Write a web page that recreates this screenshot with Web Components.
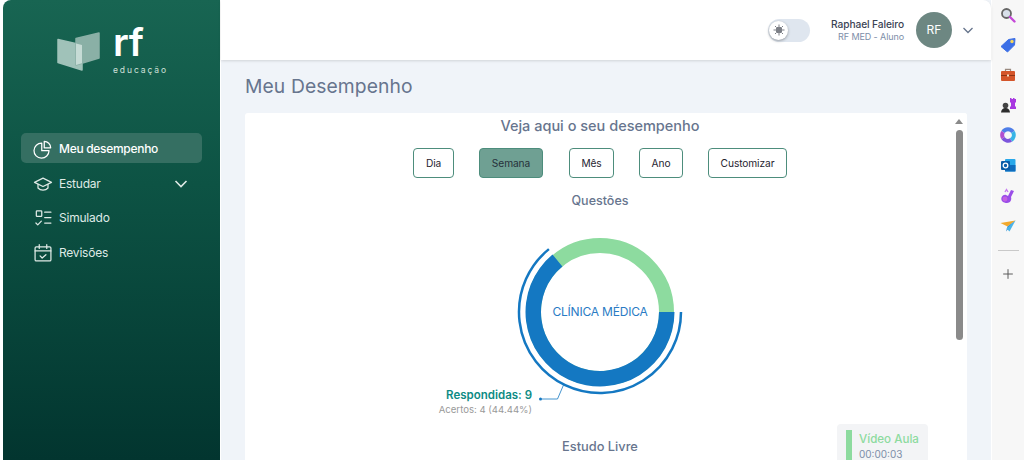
<!DOCTYPE html>
<html lang="pt"><head><meta charset="utf-8">
<style>
html,body{margin:0;padding:0;height:460px;overflow:hidden;background:#fff;font-family:"Inter","Noto Sans",sans-serif}
</style></head><body>
<rf-app></rf-app>
<script>
const FONT='"Inter","Noto Sans",sans-serif';
function def(name,html,setup){
  customElements.define(name,class extends HTMLElement{
    constructor(){super();this.attachShadow({mode:'open'}).innerHTML=html;}
    connectedCallback(){if(setup)setup(this)}
  });
}
const ICONS={
 pie:'<path d="M13.500 2.800v7.700h7.700A7.800 7.800 0 0 0 13.500 2.800Z"/><path d="M10.500 5a9 9 0 1 0 8.700 9h-8.700Z"/>',
 cap:'<path d="M12 5 1.800 10 12 15l10.200-5Z"/><path d="M6 12.500v4.300c1.500 1.600 3.700 2.500 6 2.500s4.500-.9 6-2.500v-4.300"/>',
 list:'<rect x="4" y="3.500" width="6.500" height="6.500" rx=".8"/><path d="M14 5h7.500M14 11.500h7.500M14 18h7.500M3.500 18l2.200 2.200 4.300-4.500"/>',
 cal:'<rect x="2.500" y="4.500" width="19" height="17" rx="1.500"/><path d="M2.500 9.500h19M7.500 2v4.500M16.500 2v4.500M8.500 15.500l2.500 2.500 4.500-4"/>'
};
def('rf-logo',`<style>:host{display:flex;align-items:flex-start;height:52px;gap:13px;width:109px}
.t{display:flex;flex-direction:column;color:#fff;margin-top:-3px}
.rf{font:600 39px/31px ${FONT};height:31px;letter-spacing:-.5px}
.e{font:400 8.500px/10px ${FONT};letter-spacing:1.900px;color:#cfe0da;margin-top:8px;white-space:nowrap}
svg{margin-top:3px;flex:none}
</style>
<svg width="43" height="39" viewBox="0 0 43 39" stroke-linejoin="round">
<path d="M1 7.500 25 13V38L1 30.500Z" fill="#a0c2b9" stroke="#a0c2b9" stroke-width="1.500"/>
<path d="M42 1 19 6.500V33L42 26Z" fill="#8ab0a6" stroke="#8ab0a6" stroke-width="1.500"/>
<path d="M19 11.500 25 13V31.200L19 33Z" fill="#c6dbd5"/>
</svg>
<div class="t"><span class="rf">rf</span><span class="e">educação</span></div>`);
def('nav-item',`<style>:host{display:flex;align-items:center;height:30px;box-sizing:border-box;padding:2px 14px 0 12px;gap:6px;border-radius:5px;color:#dfeae6;font:400 12px/1 ${FONT};letter-spacing:-.22px}
:host([active]){background:#356f62;color:#fff;font-weight:500;letter-spacing:-.3px}
svg.i{width:20px;height:20px;fill:none;stroke:currentColor;stroke-width:1.500;stroke-linejoin:round;stroke-linecap:round;flex:none}
.c{margin-left:auto;display:none;width:14px;height:14px;fill:none;stroke:currentColor;stroke-width:1.600}
:host([chev]) .c{display:block}
</style><svg class="i" viewBox="0 0 24 24"></svg><span><slot></slot></span><svg class="c" viewBox="0 0 14 14"><path d="M1.500 4 7 9.500 12.500 4"/></svg>`,
el=>{el.shadowRoot.querySelector('.i').innerHTML=ICONS[el.getAttribute('icon')]});
def('rf-sidebar',`<style>:host{display:flex;flex-direction:column;width:217px;margin-left:3px;height:460px;background:linear-gradient(180deg,#186552 0%,#0d5344 40%,#02352f 100%);border-top-left-radius:8px;padding:29px 18px 0;box-sizing:border-box;flex:none}
.lg{display:flex;justify-content:center}
nav{display:flex;flex-direction:column;gap:4.500px;margin-top:52px}</style>
<div class="lg"><rf-logo></rf-logo></div>
<nav><slot></slot></nav>`);
def('rf-toggle',`<style>:host{display:block;width:42px;height:23px;border-radius:12px;background:#dfe6ef;position:relative}
.k{position:absolute;left:1px;top:2px;width:19px;height:19px;border-radius:50%;background:#fff;box-shadow:0 1px 3px #0005;display:flex;align-items:center;justify-content:center}
</style><div class="k"><svg width="12" height="12" viewBox="0 0 12 12" fill="#7c7f86" stroke="#7c7f86" stroke-width="1"><circle cx="6" cy="6" r="3"/><path d="M6 .5v2M6 9.500v2M.5 6h2M9.500 6h2M2 2l1.500 1.500M8.500 8.500 10 10M2 10l1.500-1.500M8.500 3.500 10 2"/></svg></div>`);
def('rf-header',`<style>:host{display:flex;align-items:center;justify-content:flex-end;height:60px;background:#fff;border-top-right-radius:8px;box-shadow:0 1px 3px #0002;padding:0 17px 0 0;box-sizing:border-box;flex:none;position:relative}
.u{display:flex;flex-direction:column;align-items:flex-end;margin:0 12px 0 21px}
.n{font:500 10.200px/14px ${FONT};color:#3b4454;letter-spacing:-.1px}
.r{font:400 9px/12px ${FONT};color:#7d8ea8;letter-spacing:-.1px}
.a{width:36px;height:36px;border-radius:50%;background:#6d8782;color:#fff;font:400 12px/36px ${FONT};text-align:center}
svg{margin-left:10px}
</style><rf-toggle></rf-toggle><div class="u"><span class="n">Raphael Faleiro</span><span class="r">RF MED - Aluno</span></div><div class="a">RF</div>
<svg width="12" height="12" viewBox="0 0 12 12" fill="none" stroke="#66748c" stroke-width="1.300"><path d="M1.500 4 6 8.500 10.500 4"/></svg>`);
def('period-btn',`<style>:host{display:flex;align-items:center;justify-content:center;height:30px;box-sizing:border-box;border:1px solid #4d8d7c;border-radius:4px;font:400 10.200px/1 ${FONT};color:#1f2430;background:#fff;letter-spacing:-.1px}
:host([on]){background:#6fa093;color:#26313a;border-color:#4d8d7c}</style><slot></slot>`);
def('rf-donut',`<style>:host{display:block;width:320px;height:215px;position:relative}
svg{position:absolute;left:0;top:0}
.c{position:absolute;left:0;width:100%;text-align:center;font:400 12px/14px ${FONT};color:#2a7bc4;top:80px;letter-spacing:-.2px}
.l{position:absolute;left:0;top:163px;width:92px;text-align:right}
.a{display:block;font:600 11.500px/15px ${FONT};color:#0d8b84;white-space:nowrap;direction:rtl}
.b{display:block;font:400 9.600px/14px ${FONT};color:#9a9a9a;white-space:nowrap;direction:rtl}
</style><svg width="320" height="215" viewBox="0 0 320 215" fill="none">
<circle cx="160" cy="87" r="66.500" stroke="#8ddb9f" stroke-width="15"/>
<path id="blue" d="" fill="#1478c2"/>
<path id="outer" d="" stroke="#1478c2" stroke-width="2.500"/>
<path d="M123.500 160 117.500 174H101.500" stroke="#1478c2" stroke-width=".8"/>
<circle cx="100.500" cy="174" r="1.500" fill="#1478c2"/>
</svg>
<div class="c">CLÍNICA MÉDICA</div>
<div class="l"><span class="a"><bdi>Respondidas: 9</bdi></span><span class="b"><bdi>Acertos: 4 (44.44%)</bdi></span></div>`,
el=>{
 const s=el.shadowRoot,cx=160,cy=87;
 const p=(r,a)=>[cx+r*Math.cos(a),cy+r*Math.sin(a)];
 const a0=0,a1=(180+50.4)*Math.PI/180;
 const r1=74.500,r0=59,[x1,y1]=p(r1,a0),[x2,y2]=p(r1,a1),[x3,y3]=p(r0,a1),[x4,y4]=p(r0,a0);
 s.getElementById('blue').setAttribute('d',`M${x1} ${y1}A${r1} ${r1} 0 1 1 ${x2} ${y2}L${x3} ${y3}A${r0} ${r0} 0 1 0 ${x4} ${y4}Z`);
 const r=81,[a,b]=p(r,a0),[c,d]=p(r,(180+50.9)*Math.PI/180);
 s.getElementById('outer').setAttribute('d',`M${a} ${b}A${r} ${r} 0 1 1 ${c} ${d}`);
});
def('rf-legend',`<style>:host{display:flex;gap:7px;width:91px;height:60px;background:#f3f4f6;border-radius:4px;box-sizing:border-box;padding:6px 0 0 9px;position:absolute;left:592px;top:311px}
.bar{width:6px;height:60px;background:#8ddb9f;flex:none}
.x{padding-top:2px}
.t{font:500 11.600px/15px ${FONT};color:#8ddb9f;white-space:nowrap}
.s{font:400 10px/14px ${FONT};color:#7d8ea8}
</style><div class="bar"></div><div class="x"><div class="t">Vídeo Aula</div><div class="s">00:00:03</div></div>`);
def('rf-scrollbar',`<style>:host{display:block;position:absolute;right:0;top:0;bottom:0;width:17px;background:#fff}
.u{position:absolute;left:5px;top:6px;width:0;height:0;border:4px solid transparent;border-bottom:5px solid #8a8a8a;border-top:0}
.th{position:absolute;left:6px;top:17px;width:7px;height:210px;border-radius:4px;background:#8a8a8a}
</style><div class="u"></div><div class="th"></div>`);
def('rf-card',`<style>:host{display:block;position:relative;background:#fff;border-radius:3px 3px 0 0;height:347px;overflow:hidden;margin-right:24px}
.in{display:flex;flex-direction:column;align-items:center;padding-right:12px;padding-top:4px}
h2{font:500 14.500px/18px ${FONT};color:#67758e;margin:0}
.btns{display:flex;gap:25px;margin-top:13px}
h3{font:500 12.500px/16px ${FONT};color:#67758e;margin:0}
.q{margin-top:15px}
.d{margin-top:16px}
.e{margin-top:-1px;font-size:12.800px}
period-btn:nth-child(1){width:41px}period-btn:nth-child(2){width:64px}period-btn:nth-child(3){width:45px;margin-left:1px}period-btn:nth-child(4){width:44px}period-btn:nth-child(5){width:79px}
</style><div class="in"><h2>Veja aqui o seu desempenho</h2>
<div class="btns"><period-btn>Dia</period-btn><period-btn on>Semana</period-btn><period-btn>Mês</period-btn><period-btn>Ano</period-btn><period-btn>Customizar</period-btn></div>
<h3 class="q">Questões</h3><rf-donut class="d"></rf-donut><h3 class="e">Estudo Livre</h3></div><rf-legend></rf-legend><rf-scrollbar></rf-scrollbar>`);
def('ext-bar',`<style>:host{display:flex;flex-direction:column;align-items:center;width:32px;margin-left:1px;background:#f7f7f7;box-sizing:border-box;padding-top:7px;flex:none;height:460px}
svg{display:block;width:16px;height:16px;margin-bottom:14.100px;flex:none}
hr{width:21px;border:0;border-top:1px solid #c9c9c9;margin:2px 0 16px}
</style>
<svg viewBox="0 0 16 16"><circle cx="6.500" cy="6.500" r="4.500" fill="#d8e0ea" stroke="#666" stroke-width="1.800"/><path d="M10 10l4.500 4.500" stroke="#c548d8" stroke-width="2.400" stroke-linecap="round"/></svg>
<svg viewBox="0 0 16 16"><path d="M1 9.500 8.500 2.500 15 1.500 14.500 8 7.500 15Z" fill="#3c6fe6" stroke="#3c6fe6" stroke-linejoin="round"/><circle cx="12" cy="4.500" r="1.700" fill="#f6d65a"/></svg>
<svg viewBox="0 0 16 16"><path d="M5.500 4V2.300h5V4" fill="none" stroke="#9a8a80" stroke-width="1.200"/><rect x="1" y="4" width="14" height="10" rx="1" fill="#d4552a"/><path d="M1 8.500h14" stroke="#8f3414"/><rect x="7" y="7.500" width="2" height="2" fill="#f7e2c8"/></svg>
<svg viewBox="0 0 16 16"><circle cx="5.500" cy="8.500" r="2.800" fill="#444"/><path d="M1 15.500C1.500 12 3.500 11 5.500 11s4 1 4.500 4.500Z" fill="#2d2d2d"/><path d="M10 1h1.500v1H13V1h1.500v1H16v3l-1 1v3.500h1V12h-6V9.500h1V6l-1-1Z" fill="#a838e0"/></svg>
<svg viewBox="0 0 16 16" fill="none" stroke-width="4"><path d="M3 5A6 6 0 0 1 13 5" stroke="#4f7ee8"/><path d="M13 5A6 6 0 0 1 11 13" stroke="#37b4e6"/><path d="M11 13A6 6 0 0 1 3 11" stroke="#7c55dc"/><path d="M3 11A6 6 0 0 1 3 5" stroke="#b04fd0"/></svg>
<svg viewBox="0 0 16 16"><rect x="5" y="2" width="10.500" height="12.500" rx="1" fill="#28a8ea"/><rect x="5" y="8" width="10.500" height="6.500" fill="#0f6cbd"/><rect x="1" y="4" width="9" height="9" rx="1" fill="#0a5ea8"/><circle cx="5.500" cy="8.500" r="2.300" fill="none" stroke="#fff" stroke-width="1.300"/></svg>
<svg viewBox="0 0 16 16"><path d="M2 13C0 10 3 6 6 7l2 1 3-6 3 1-3 6c1 3-1 6-4 6-1.500 0-4-.5-5-2Z" fill="#9a4de8"/><path d="M5 4l1.500-2.500L8 4" stroke="#c77df0" stroke-width="1.400" fill="none"/><circle cx="5" cy="11" r="2.400" fill="#c45fe2"/></svg>
<svg viewBox="0 0 16 16"><path d="M0.500 5 15.500 2.500 7.500 8.500Z" fill="#f2a92c"/><path d="M15.500 2.500 7.500 8.500 6 13.500Z" fill="#2a8ad0"/><path d="M15.500 2.500 9.500 13.500 6.500 10.500Z" fill="#4cb4e8"/></svg>
<hr>
<svg viewBox="0 0 16 16" style="width:14px;height:14px"><path d="M8 2.500v11M2.500 8h11" stroke="#555" stroke-width="1.100"/></svg>`);
def('rf-app',`<style>:host{display:flex;width:1024px;height:460px;overflow:hidden}
.main{flex:1;display:flex;flex-direction:column;background:#f0f4f9;min-width:0;margin-left:1px}
h1{font:400 19.300px/25px ${FONT};color:#67758e;margin:0;letter-spacing:.1px}
.body{padding:14px 0 0 24px;display:flex;flex-direction:column;gap:14px}
</style>
<rf-sidebar>
<nav-item icon="pie" active>Meu desempenho</nav-item>
<nav-item icon="cap" chev>Estudar</nav-item>
<nav-item icon="list">Simulado</nav-item>
<nav-item icon="cal">Revisões</nav-item>
</rf-sidebar>
<div class="main"><rf-header></rf-header><div class="body"><h1>Meu Desempenho</h1><rf-card></rf-card></div></div>
<ext-bar></ext-bar>`);
</script></body></html>
